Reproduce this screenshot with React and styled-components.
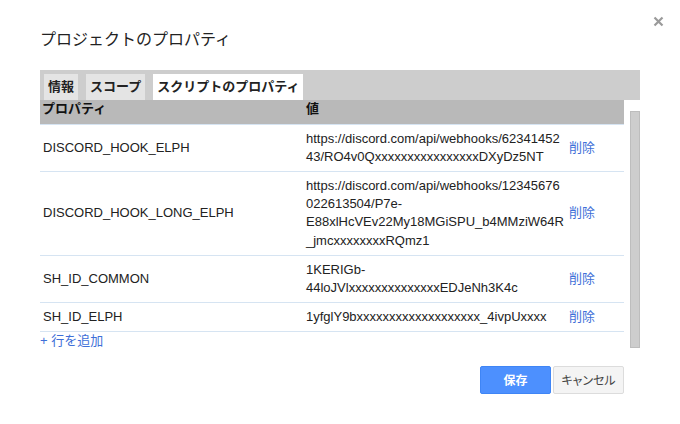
import React from "react";
import styled, { createGlobalStyle } from "styled-components";

const GlobalStyle = createGlobalStyle`
  html, body { margin: 0; padding: 0; background: #fff; }
  body {
    font-family: "Liberation Sans", Arial, "Noto Sans CJK JP", sans-serif;
    color: #222;
  }
`;

const Dialog = styled.div`
  position: relative;
  width: 680px;
  height: 424px;
  box-sizing: border-box;
  padding: 30px 40px 0;
  background: #fff;
`;

const Title = styled.div`
  font-size: 16px;
  line-height: 20px;
  color: #222;
  height: 20px;
`;

const Close = styled.button`
  position: absolute;
  top: 16px;
  left: 653px;
  width: 11px;
  height: 11px;
  padding: 0;
  border: 0;
  background: transparent;
  display: flex;
  cursor: pointer;
`;

const TabBar = styled.div`
  margin-top: 20px;
  height: 30px;
  box-sizing: border-box;
  padding: 4px 4px 0;
  display: flex;
  gap: 8px;
  background: #cdcdcd;
`;

const Tab = styled.div`
  height: 26px;
  line-height: 26px;
  padding: 0 4px;
  font-size: 13px;
  font-weight: bold;
  color: #222;
  background: ${(p) => (p.$active ? "#fff" : "#e4e4e4")};
`;

const Body = styled.div`
  display: flex;
  align-items: flex-start;
`;

const Main = styled.div`
  width: 584px;
  display: flex;
  flex-direction: column;
`;

const Scrollbar = styled.div`
  margin-left: 6px;
  margin-top: 11px;
  width: 10px;
  height: 237px;
  box-sizing: border-box;
  background: #cdcdcd;
  border: 1px solid #bdbdbd;
`;

const Table = styled.table`
  width: 584px;
  table-layout: fixed;
  border-collapse: collapse;
  font-size: 13px;
`;

const HeadCell = styled.th`
  background: #b9b9b9;
  font-weight: bold;
  text-align: left;
  line-height: 18px;
  height: 24px;
  box-sizing: border-box;
  padding: 0 0 5px ${(p) => p.$pl || 2}px;
  vertical-align: top;
  color: #111;
  border-bottom: 1px solid #d6e4f2;
`;

const Row = styled.tr`
  border-bottom: 1px solid #d6e4f2;
`;

const Cell = styled.td`
  line-height: 18.3px;
  padding: 5px 0 4.7px ${(p) => p.$pl || 3}px;
  vertical-align: middle;
  color: #222;
  overflow-wrap: break-word;
`;

const ActionCell = styled.td`
  line-height: 16px;
  padding: 0 0 0 3px;
  vertical-align: middle;
`;

const DeleteLink = styled.a`
  color: #3e6fd8;
  text-decoration: none;
  cursor: pointer;
`;

const AddRow = styled.a`
  display: block;
  margin-top: 1px;
  font-size: 13px;
  line-height: 16px;
  color: #3e6fd8;
  text-decoration: none;
  cursor: pointer;
`;

const Footer = styled.div`
  width: 584px;
  margin-top: 17px;
  display: flex;
  justify-content: flex-end;
  gap: 2px;
`;

const Button = styled.button`
  width: 71px;
  height: 28px;
  box-sizing: border-box;
  border-radius: 2px;
  font-family: "Liberation Sans", Arial, "Noto Sans CJK JP", sans-serif;
  font-size: 12px;
  padding: 0;
  cursor: pointer;
  font-feature-settings: "palt";
  border: 1px solid ${(p) => (p.$primary ? "#3f85f5" : "#dcdcdc")};
  background: ${(p) => (p.$primary ? "#4d90fe" : "#f4f4f4")};
  color: ${(p) => (p.$primary ? "#fff" : "#444")};
  font-weight: ${(p) => (p.$primary ? "bold" : "normal")};
`;

const rows = [
  {
    key: "DISCORD_HOOK_ELPH",
    value:
      "https://discord.com/api/webhooks/6234145243/RO4v0QxxxxxxxxxxxxxxxxDXyDz5NT",
  },
  {
    key: "DISCORD_HOOK_LONG_ELPH",
    value:
      "https://discord.com/api/webhooks/12345676022613504/P7e-E88xlHcVEv22My18MGiSPU_b4MMziW64R_jmcxxxxxxxxRQmz1",
  },
  {
    key: "SH_ID_COMMON",
    value: "1KERIGb-44loJVlxxxxxxxxxxxxxxEDJeNh3K4c",
  },
  {
    key: "SH_ID_ELPH",
    value: "1yfglY9bxxxxxxxxxxxxxxxxxxx_4ivpUxxxx",
  },
];

export default function App() {
  return (
    <>
      <GlobalStyle />
      <Dialog>
        <Title>プロジェクトのプロパティ</Title>
        <Close aria-label="閉じる">
          <svg width="11" height="11" viewBox="0 0 11 11">
            <path
              d="M1.5 1.5 L9.5 9.5 M9.5 1.5 L1.5 9.5"
              stroke="#9a9a9a"
              strokeWidth="2.2"
              fill="none"
            />
          </svg>
        </Close>
        <TabBar>
          <Tab>情報</Tab>
          <Tab>スコープ</Tab>
          <Tab $active>スクリプトのプロパティ</Tab>
        </TabBar>
        <Body>
          <Main>
            <Table>
              <colgroup>
                <col style={{ width: 260 }} />
                <col style={{ width: 266 }} />
                <col style={{ width: 58 }} />
              </colgroup>
              <thead>
                <tr>
                  <HeadCell>プロパティ</HeadCell>
                  <HeadCell $pl={6}>値</HeadCell>
                  <HeadCell />
                </tr>
              </thead>
              <tbody>
                {rows.map((r) => (
                  <Row key={r.key}>
                    <Cell>{r.key}</Cell>
                    <Cell $pl={6}>{r.value}</Cell>
                    <ActionCell>
                      <DeleteLink>削除</DeleteLink>
                    </ActionCell>
                  </Row>
                ))}
              </tbody>
            </Table>
            <AddRow>+ 行を追加</AddRow>
          </Main>
          <Scrollbar />
        </Body>
        <Footer>
          <Button $primary>保存</Button>
          <Button>キャンセル</Button>
        </Footer>
      </Dialog>
    </>
  );
}
